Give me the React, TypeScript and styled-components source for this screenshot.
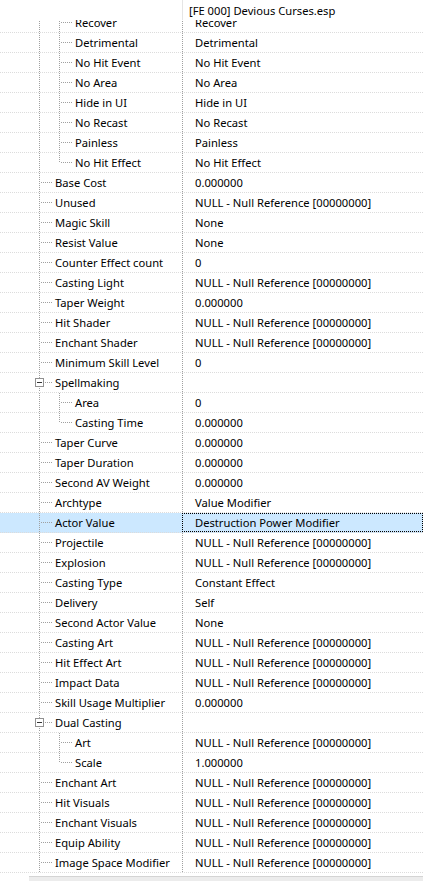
import React from "react";
import styled, { createGlobalStyle } from "styled-components";

interface Row {
  name: string;
  value: string;
  level: 1 | 2;
  expander?: boolean;
  last?: boolean;
  selected?: boolean;
}

const NULL_REF = "NULL - Null Reference [00000000]";
const ZERO = "0.000000";

const rows: Row[] = [
  { name: "Recover", value: "Recover", level: 2 },
  { name: "Detrimental", value: "Detrimental", level: 2 },
  { name: "No Hit Event", value: "No Hit Event", level: 2 },
  { name: "No Area", value: "No Area", level: 2 },
  { name: "Hide in UI", value: "Hide in UI", level: 2 },
  { name: "No Recast", value: "No Recast", level: 2 },
  { name: "Painless", value: "Painless", level: 2 },
  { name: "No Hit Effect", value: "No Hit Effect", level: 2, last: true },
  { name: "Base Cost", value: ZERO, level: 1 },
  { name: "Unused", value: NULL_REF, level: 1 },
  { name: "Magic Skill", value: "None", level: 1 },
  { name: "Resist Value", value: "None", level: 1 },
  { name: "Counter Effect count", value: "0", level: 1 },
  { name: "Casting Light", value: NULL_REF, level: 1 },
  { name: "Taper Weight", value: ZERO, level: 1 },
  { name: "Hit Shader", value: NULL_REF, level: 1 },
  { name: "Enchant Shader", value: NULL_REF, level: 1 },
  { name: "Minimum Skill Level", value: "0", level: 1 },
  { name: "Spellmaking", value: "", level: 1, expander: true },
  { name: "Area", value: "0", level: 2 },
  { name: "Casting Time", value: ZERO, level: 2, last: true },
  { name: "Taper Curve", value: ZERO, level: 1 },
  { name: "Taper Duration", value: ZERO, level: 1 },
  { name: "Second AV Weight", value: ZERO, level: 1 },
  { name: "Archtype", value: "Value Modifier", level: 1 },
  { name: "Actor Value", value: "Destruction Power Modifier", level: 1, selected: true },
  { name: "Projectile", value: NULL_REF, level: 1 },
  { name: "Explosion", value: NULL_REF, level: 1 },
  { name: "Casting Type", value: "Constant Effect", level: 1 },
  { name: "Delivery", value: "Self", level: 1 },
  { name: "Second Actor Value", value: "None", level: 1 },
  { name: "Casting Art", value: NULL_REF, level: 1 },
  { name: "Hit Effect Art", value: NULL_REF, level: 1 },
  { name: "Impact Data", value: NULL_REF, level: 1 },
  { name: "Skill Usage Multiplier", value: ZERO, level: 1 },
  { name: "Dual Casting", value: "", level: 1, expander: true },
  { name: "Art", value: NULL_REF, level: 2 },
  { name: "Scale", value: "1.000000", level: 2, last: true },
  { name: "Enchant Art", value: NULL_REF, level: 1 },
  { name: "Hit Visuals", value: NULL_REF, level: 1 },
  { name: "Enchant Visuals", value: NULL_REF, level: 1 },
  { name: "Equip Ability", value: NULL_REF, level: 1 },
  { name: "Image Space Modifier", value: NULL_REF, level: 1 },
];

const GlobalStyle = createGlobalStyle`
  html, body {
    margin: 0;
    padding: 0;
    background: #fff;
  }
  body {
    font-family: "Noto Sans", "Open Sans", sans-serif;
    font-size: 11.2px;
    color: #000;
  }
`;

const Tree = styled.div`
  width: 423px;
  height: 881px;
  display: flex;
  flex-direction: column;
  background: #fff;
  overflow: hidden;
`;

const Header = styled.div`
  display: grid;
  grid-template-columns: 182px 1fr;
  height: 20px;
  flex: none;
`;

const HeaderCell = styled.div<{ $divider?: boolean }>`
  padding-left: 6px;
  padding-top: 1px;
  line-height: 19px;
  border-left: ${(p) => (p.$divider ? "1px solid #e5e5e5" : "none")};
  white-space: nowrap;
`;

const Body = styled.div`
  height: 853px;
  flex: none;
  overflow: hidden;
`;

// the list is scrolled a few pixels down
const List = styled.div`
  margin-top: -7px;
`;

const RowLine = styled.div<{ $selected?: boolean }>`
  display: grid;
  grid-template-columns: 182px 1fr;
  height: 19px;
  border-bottom: 1px dotted #dcdcdc;
  background: ${(p) => (p.$selected ? "#cce8ff" : "transparent")};
`;

const NameCell = styled.div`
  display: flex;
  align-items: flex-start;
  height: 19px;
  white-space: nowrap;
  overflow: hidden;
`;

const ValueCell = styled.div<{ $focused?: boolean }>`
  display: flex;
  align-items: flex-start;
  height: 19px;
  padding-left: 12px;
  border-left: 1px dotted #a0a0a0;
  white-space: nowrap;
  overflow: hidden;
  outline: ${(p) => (p.$focused ? "1px dotted #000" : "none")};
  outline-offset: -1px;
`;

const Label = styled.span`
  padding-top: 1px;
  line-height: 18px;
`;

const Footer = styled.div`
  flex: 1;
  display: flex;
  padding-top: 3px;
  padding-left: 29px;
`;

const ScrollEdge = styled.div`
  flex: 1;
  border-top: 1px solid #d4d4d4;
  background: #ececec;
`;

const GUIDE = "#a0a0a0";

const Guides: React.FC<{ row: Row }> = ({ row }) => {
  const width = row.level === 2 ? 75 : 55;
  return (
    <svg width={width} height={19} style={{ flex: "none", display: "block" }} shapeRendering="crispEdges">
      {row.expander ? (
        <>
          <line x1={39.5} y1={0} x2={39.5} y2={6} stroke={GUIDE} strokeDasharray="1 1" />
          <line x1={39.5} y1={15} x2={39.5} y2={20} stroke={GUIDE} strokeDasharray="1 1" />
          <rect x={35.5} y={5.5} width={8} height={8} fill="#fff" stroke="#919191" />
          <line x1={37} y1={9.5} x2={42} y2={9.5} stroke="#333" />
          <line x1={45} y1={9.5} x2={53} y2={9.5} stroke={GUIDE} strokeDasharray="1 1" />
        </>
      ) : (
        <line x1={39.5} y1={0} x2={39.5} y2={20} stroke={GUIDE} strokeDasharray="1 1" />
      )}
      {row.level === 1 && !row.expander && (
        <line x1={41} y1={9.5} x2={53} y2={9.5} stroke={GUIDE} strokeDasharray="1 1" />
      )}
      {row.level === 2 && (
        <>
          <line
            x1={59.5}
            y1={0}
            x2={59.5}
            y2={row.last ? 10 : 20}
            stroke={GUIDE}
            strokeDasharray="1 1"
          />
          <line x1={61} y1={9.5} x2={73} y2={9.5} stroke={GUIDE} strokeDasharray="1 1" />
        </>
      )}
    </svg>
  );
};

const App: React.FC = () => {
  return (
    <>
      <GlobalStyle />
      <Tree>
        <Header>
          <HeaderCell />
          <HeaderCell $divider>[FE 000] Devious Curses.esp</HeaderCell>
        </Header>
        <Body>
          <List>
            {rows.map((row, i) => (
              <RowLine key={i} $selected={row.selected}>
                <NameCell>
                  <Guides row={row} />
                  <Label>{row.name}</Label>
                </NameCell>
                <ValueCell $focused={row.selected}>
                  <Label>{row.value}</Label>
                </ValueCell>
              </RowLine>
            ))}
          </List>
        </Body>
        <Footer>
          <ScrollEdge />
        </Footer>
      </Tree>
    </>
  );
};

export default App;
